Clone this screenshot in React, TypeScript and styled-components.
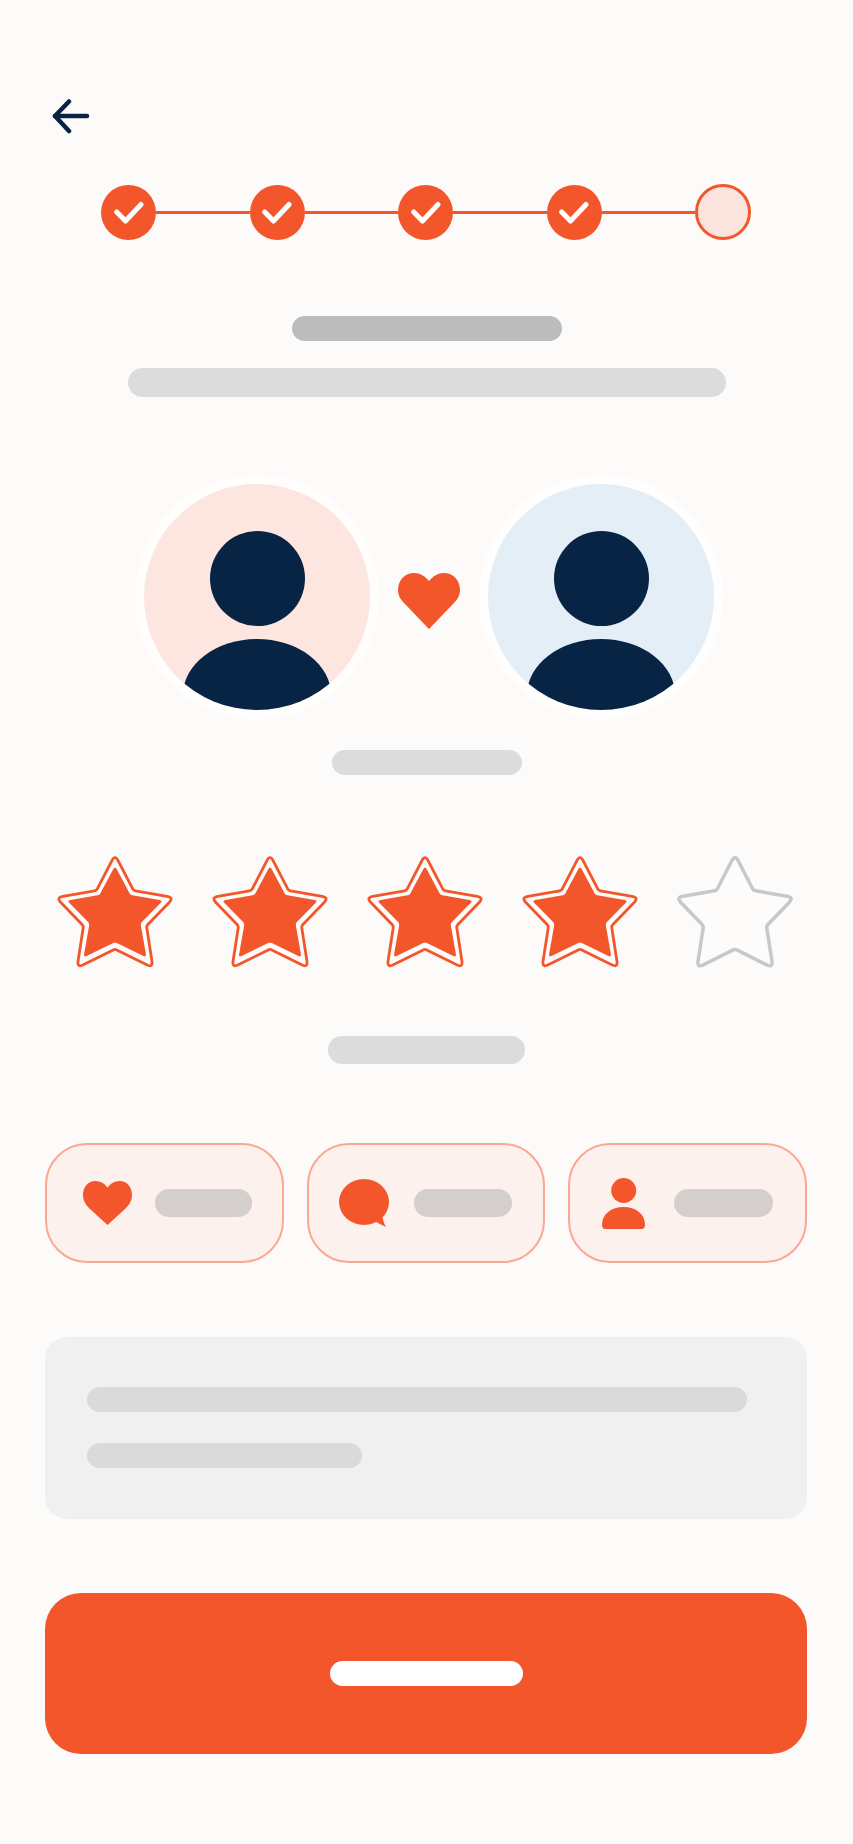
import React from 'react';
import styled, { createGlobalStyle } from 'styled-components';

const ORANGE = '#f4562c';
const NAVY = '#082445';

const GlobalStyle = createGlobalStyle`
  html, body {
    margin: 0;
    padding: 0;
    background: #fdfbf9;
    font-family: "Liberation Sans", Arial, sans-serif;
  }
`;

const Page = styled.div`
  width: 853px;
  height: 1844px;
  box-sizing: border-box;
  padding-top: 99px;
  overflow: hidden;
`;

const BackButton = styled.button`
  display: block;
  width: 38px;
  height: 36px;
  margin-left: 52px;
  padding: 0;
  border: 0;
  background: none;
`;

const Stepper = styled.div`
  display: flex;
  align-items: center;
  margin-top: 49px;
  padding: 0 102px 0 101px;
`;

const StepDone = styled.div`
  flex: none;
  display: flex;
  align-items: center;
  justify-content: center;
  width: 55px;
  height: 55px;
  border-radius: 50%;
  background: ${ORANGE};
`;

const StepCurrent = styled.div`
  flex: none;
  box-sizing: border-box;
  width: 56px;
  height: 56px;
  border: 3px solid ${ORANGE};
  border-radius: 50%;
  background: #fbe4dd;
`;

const StepLine = styled.div`
  flex: 1;
  height: 3px;
  background: ${ORANGE};
`;

const Bar = styled.div<{ $w: number; $h: number; $color?: string }>`
  width: ${(p) => p.$w}px;
  height: ${(p) => p.$h}px;
  border-radius: ${(p) => p.$h / 2}px;
  background: ${(p) => p.$color ?? '#dcdcdc'};
`;

const Heading = styled.div`
  display: flex;
  flex-direction: column;
  align-items: center;
  gap: 27px;
  margin-top: 76px;
`;

const Couple = styled.div`
  display: flex;
  align-items: center;
  justify-content: center;
  gap: 19px;
  margin-top: 78px;
  padding-left: 5px;
`;

const Avatar = styled.div<{ $tint: string }>`
  position: relative;
  flex: none;
  width: 226px;
  height: 226px;
  border: 9px solid #fffefd;
  border-radius: 50%;
  overflow: hidden;
  background: ${(p) => p.$tint};
`;

const Head = styled.div`
  position: absolute;
  top: 47px;
  left: 66px;
  width: 95px;
  height: 95px;
  border-radius: 50%;
  background: ${NAVY};
`;

const Shoulders = styled.div`
  position: absolute;
  top: 155px;
  left: 39px;
  width: 148px;
  height: 112px;
  border-radius: 50%;
  background: ${NAVY};
`;

const HeartSlot = styled.div`
  display: flex;
  margin-top: 8px;
`;

const Centered = styled.div<{ $top: number }>`
  display: flex;
  justify-content: center;
  margin-top: ${(p) => p.$top}px;
`;

const Stars = styled.div`
  display: flex;
  justify-content: space-between;
  margin-top: 77px;
  padding: 0 57px 0 54px;
`;

const Cards = styled.div`
  display: grid;
  grid-template-columns: repeat(3, 1fr);
  gap: 23px;
  margin: 79px 46px 0 45px;
`;

const Card = styled.div<{ $inset: number; $end: number }>`
  display: flex;
  align-items: center;
  justify-content: space-between;
  box-sizing: border-box;
  height: 120px;
  padding: 0 ${(p) => p.$end}px 0 ${(p) => p.$inset}px;
  border: 2px solid #fca793;
  border-radius: 42px;
  background: #fdf1ed;
`;

const Panel = styled.div`
  display: flex;
  flex-direction: column;
  gap: 31px;
  box-sizing: border-box;
  height: 182px;
  margin: 74px 46px 0 45px;
  padding: 50px 0 0 42px;
  border-radius: 22px;
  background: #f0f0f0;
`;

const SubmitButton = styled.button`
  display: flex;
  align-items: center;
  justify-content: center;
  width: 762px;
  height: 161px;
  margin: 74px 0 0 45px;
  padding: 0;
  border: 0;
  border-radius: 36px;
  background: ${ORANGE};
`;

const Check = () => (
  <svg width="30" height="26" viewBox="0 0 30 26" fill="none">
    <path d="M2.700 13l8.800 9L27 5.500" stroke="#fff" strokeWidth="5" strokeLinecap="round" strokeLinejoin="round" />
  </svg>
);

const BackArrow = () => (
  <svg width="38" height="36" viewBox="0 0 38 36" fill="none" stroke={NAVY} strokeWidth="4.500" strokeLinecap="round" strokeLinejoin="round">
    <path d="M17 2.500L3 17l14 15" />
    <path d="M3 17h32" />
  </svg>
);

const BigHeart = () => (
  <svg width="62" height="56" viewBox="0 0 62 56" fill={ORANGE}>
    <path d="M31 8C27 3 22 0 16 0 7 0 0 7 0 17c0 7 4 11 8 15l21 22c1 2 3 2 4 0l21-22c4-4 8-8 8-15C62 7 55 0 46 0 40 0 35 3 31 8z" />
  </svg>
);

const OUTER: [number, number][] = [
  [58, -1.400], [76.500, 34.500], [117, 41.500], [89.500, 70], [96, 112], [58, 93], [20, 112], [26.500, 70], [-1, 41.500], [39.500, 34.500],
];
const INNER: [number, number][] = [
  [58, 10], [73.500, 39], [106, 44.500], [83.500, 67.500], [89.500, 101.500], [58, 86], [26.500, 101.500], [32.500, 67.500], [10, 44.500], [42.500, 39],
];

// rounds the tips of a polygon, leaves the notches nearly sharp
const roundedPath = (pts: [number, number][], tipRadius: number) => {
  const n = pts.length;
  let d = '';
  pts.forEach((p, i) => {
    const prev = pts[(i + n - 1) % n];
    const next = pts[(i + 1) % n];
    const r = i % 2 === 0 ? tipRadius : 2;
    const toward = (q: [number, number]) => {
      const len = Math.hypot(q[0] - p[0], q[1] - p[1]);
      return [p[0] + ((q[0] - p[0]) * r) / len, p[1] + ((q[1] - p[1]) * r) / len];
    };
    const a = toward(prev);
    const b = toward(next);
    d += `${i === 0 ? 'M' : 'L'}${a[0]} ${a[1]}Q${p[0]} ${p[1]} ${b[0]} ${b[1]}`;
  });
  return d + 'Z';
};

const Star = ({ on }: { on: boolean }) => (
  <svg width="122" height="120" viewBox="-3 -4 122 120">
    <path
      d={roundedPath(OUTER, 7)}
      fill={on ? '#fffdfc' : '#fdfcfa'}
      stroke={on ? ORANGE : '#c8c8c8'}
      strokeWidth={on ? 2.800 : 3.500}
    />
    {on && <path d={roundedPath(INNER, 3.500)} fill={ORANGE} />}
  </svg>
);

const CardHeart = () => (
  <svg width="49" height="44" viewBox="0 0 49 44" fill={ORANGE}>
    <path d="M24.500 6.500C21 2 17 0 12.500 0 5 0 0 6 0 14c0 6 3 10 7 14l17.500 16L42 28c4-4 7-8 7-14 0-8-5-14-12.500-14C32 0 28 2 24.500 6.500z" />
  </svg>
);

const Bubble = () => (
  <svg width="50" height="48" viewBox="0 0 50 48" fill={ORANGE}>
    <ellipse cx="25" cy="23" rx="25" ry="23" />
    <path d="M34 42l3 1 10 5c-2-3-3-7-4-12z" />
  </svg>
);

const Person = () => (
  <svg width="43" height="51" viewBox="0 0 43 51" fill={ORANGE}>
    <circle cx="21.700" cy="12.500" r="12.500" />
    <path d="M0 47C0 36 9 29 21.500 29S43 36 43 47c0 2-1 4-3 4H3c-2 0-3-2-3-4z" />
  </svg>
);

const STAR_STATES = [true, true, true, true, false];

export default function App() {
  return (
    <Page>
      <GlobalStyle />
      <BackButton aria-label="Back">
        <BackArrow />
      </BackButton>

      <Stepper>
        <StepDone><Check /></StepDone>
        <StepLine />
        <StepDone><Check /></StepDone>
        <StepLine />
        <StepDone><Check /></StepDone>
        <StepLine />
        <StepDone><Check /></StepDone>
        <StepLine />
        <StepCurrent />
      </Stepper>

      <Heading>
        <Bar $w={270} $h={25} $color="#bcbcbc" />
        <Bar $w={598} $h={29} />
      </Heading>

      <Couple>
        <Avatar $tint="#fce6df">
          <Head />
          <Shoulders />
        </Avatar>
        <HeartSlot>
          <BigHeart />
        </HeartSlot>
        <Avatar $tint="#e3eef6">
          <Head />
          <Shoulders />
        </Avatar>
      </Couple>

      <Centered $top={31}>
        <Bar $w={190} $h={25} />
      </Centered>

      <Stars>
        {STAR_STATES.map((on, i) => (
          <Star key={i} on={on} />
        ))}
      </Stars>

      <Centered $top={64}>
        <Bar $w={197} $h={28} />
      </Centered>

      <Cards>
        <Card $inset={36} $end={30}>
          <CardHeart />
          <Bar $w={97} $h={28} $color="#d4cfcd" />
        </Card>
        <Card $inset={30} $end={31}>
          <Bubble />
          <Bar $w={98} $h={28} $color="#d4cfcd" />
        </Card>
        <Card $inset={32} $end={32}>
          <Person />
          <Bar $w={99} $h={28} $color="#d4cfcd" />
        </Card>
      </Cards>

      <Panel>
        <Bar $w={660} $h={25} $color="#dadada" />
        <Bar $w={275} $h={25} $color="#dadada" />
      </Panel>

      <SubmitButton aria-label="Continue">
        <Bar $w={193} $h={25} $color="#ffffff" />
      </SubmitButton>
    </Page>
  );
}
